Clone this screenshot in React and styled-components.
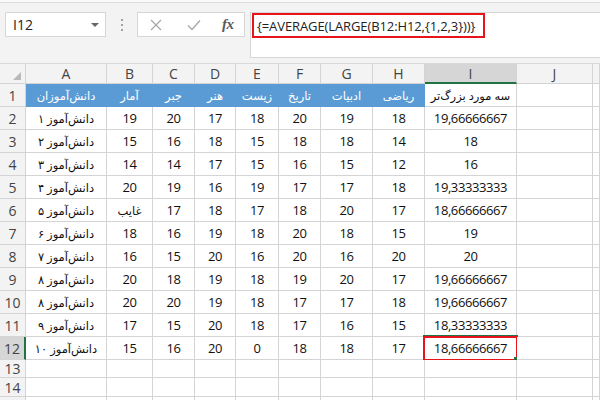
import React from 'react';
import styled, { createGlobalStyle, css } from 'styled-components';

const Global = createGlobalStyle`
  html, body { margin: 0; padding: 0; background: #fff; }
  body { font-family: "Open Sans", "DejaVu Sans", sans-serif; }
  #root { width: 600px; height: 400px; overflow: hidden; }
`;

const Page = styled.div`
  width: 600px;
  height: 400px;
  display: flex;
  flex-direction: column;
  overflow: hidden;
  background: #fff;
`;

const Toolbar = styled.div`
  flex: none;
  height: 63px;
  box-sizing: border-box;
  background: #f3f3f3;
  border-top: 2px solid #fafafa;
  box-shadow: inset 0 1px 0 #dcdcdc;
  display: flex;
  align-items: flex-start;
  padding: 10px 0 0 5px;
`;

const NameBox = styled.div`
  width: 101px;
  height: 25px;
  box-sizing: border-box;
  background: #fff;
  border: 1px solid #d6d6d6;
  display: flex;
  align-items: center;
  justify-content: space-between;
  padding: 0 6px 0 7px;
  font-size: 14px;
  color: #222;
`;

const Caret = styled.span`
  width: 0;
  height: 0;
  border-left: 4px solid transparent;
  border-right: 4px solid transparent;
  border-top: 4px solid #666;
`;

const Dots = styled.div`
  width: 31px;
  height: 25px;
  display: flex;
  flex-direction: column;
  align-items: center;
  justify-content: center;
  gap: 3px;
  span {
    width: 2px;
    height: 2px;
    background: #a0a0a0;
  }
`;

const Buttons = styled.div`
  width: 108px;
  height: 25px;
  box-sizing: border-box;
  background: #fff;
  border: 1px solid #d6d6d6;
  display: flex;
  align-items: center;
  padding: 0 0 0 12px;
`;

const IconSlot = styled.div`
  width: ${p => p.$w}px;
  display: flex;
  align-items: center;
  color: #a8a8a8;
`;

const Fx = styled.span`
  font-family: "Liberation Serif", "DejaVu Serif", serif;
  font-style: italic;
  font-weight: bold;
  font-size: 15px;
  color: #5a5a5a;
  letter-spacing: -0.5px;
`;

const FormulaBar = styled.div`
  margin-left: 5px;
  flex: 1;
  height: 46px;
  box-sizing: border-box;
  background: #fff;
  border: 1px solid #d6d6d6;
  border-right: none;
  padding: 0 0 0 1px;
`;

const FormulaText = styled.div`
  width: 233px;
  height: 25px;
  box-sizing: border-box;
  border: 2px solid #e8141c;
  display: flex;
  align-items: center;
  padding-left: 3px;
  font-size: 13px;
  letter-spacing: -0.1px;
  color: #222;
  white-space: nowrap;
`;

const cols = [26, 81, 46, 42, 41, 43, 42, 52, 52, 92, 76];

const Sheet = styled.div`
  display: grid;
  grid-template-columns: ${cols.map(c => c + 'px').join(' ')} 1fr;
  grid-template-rows: 21px repeat(12, 23px) 18px 19px 20px;
`;

const HeadBase = css`
  box-sizing: border-box;
  background: #f3f3f3;
  color: #444;
  display: flex;
  align-items: center;
  justify-content: center;
  font-family: "Open Sans", sans-serif;
  font-size: 14px;
`;

const Corner = styled.div`
  ${HeadBase};
  border-top: 1px solid #d9d9d9;
  border-right: 1px solid #d4d4d4;
  border-bottom: 1px solid #d4d4d4;
  position: relative;
  &::after {
    content: '';
    position: absolute;
    right: 4px;
    bottom: 3px;
    width: 0;
    height: 0;
    border-left: 8px solid transparent;
    border-bottom: 8px solid #b9b9b9;
  }
`;

const ColHead = styled.div`
  ${HeadBase};
  border-top: 1px solid #d9d9d9;
  border-right: 1px solid #d4d4d4;
  border-bottom: ${p => p.$sel ? '2px solid #217346' : '1px solid #d4d4d4'};
  background: ${p => p.$sel ? '#d6d6d6' : '#f3f3f3'};
`;

const RowHead = styled.div`
  ${HeadBase};
  border-bottom: 1px solid #d4d4d4;
  border-right: ${p => p.$sel ? '2px solid #217346' : '1px solid #d4d4d4'};
  background: ${p => p.$sel ? '#d6d6d6' : '#f3f3f3'};
`;

const Cell = styled.div`
  box-sizing: border-box;
  position: relative;
  display: flex;
  align-items: center;
  justify-content: center;
  white-space: nowrap;
  color: #111;
  font-size: 13px;
  letter-spacing: -0.4px;
  border-right: 1px solid ${p => p.$blue ? '#5b9bd5' : '#d4d4d4'};
  border-bottom: 1px solid ${p => p.$blue ? '#5b9bd5' : '#d4d4d4'};
  background: ${p => p.$blue ? '#5b9bd5' : '#fff'};
  ${p => p.$blue && css`color: #fff;`}
  ${p => p.$text && css`direction: rtl; font-size: 11.5px; letter-spacing: 0;`}
`;

const Selection = styled.div`
  position: absolute;
  top: -1px;
  left: -2px;
  right: -2px;
  bottom: -2px;
  border: 2px solid #e8141c;
  box-shadow: 0 -1px 0 #217346;
  pointer-events: none;
`;

const Handle = styled.div`
  position: absolute;
  right: -3px;
  bottom: -3px;
  width: 5px;
  height: 5px;
  background: #217346;
`;

const letters = ['A', 'B', 'C', 'D', 'E', 'F', 'G', 'H', 'I', 'J', ''];

const headers = ['دانش\u200cآموزان', 'آمار', 'جبر', 'هنر', 'زیست', 'تاریخ', 'ادبیات', 'ریاضی', 'سه مورد بزرگ\u200cتر'];

const fa = ['۱', '۲', '۳', '۴', '۵', '۶', '۷', '۸', '۸', '۹', '۱۰'];

const data = [
  ['19', '20', '17', '18', '20', '19', '18', '19,66666667'],
  ['15', '16', '18', '15', '18', '18', '14', '18'],
  ['14', '14', '17', '15', '16', '15', '12', '16'],
  ['20', '19', '16', '19', '17', '17', '18', '19,33333333'],
  ['غایب', '17', '18', '17', '18', '20', '17', '18,66666667'],
  ['18', '16', '19', '18', '20', '18', '15', '19'],
  ['16', '15', '20', '16', '20', '16', '20', '20'],
  ['20', '18', '19', '18', '19', '20', '17', '19,66666667'],
  ['20', '20', '19', '18', '17', '17', '18', '19,66666667'],
  ['17', '15', '20', '18', '17', '16', '15', '18,33333333'],
  ['15', '16', '20', '0', '18', '18', '17', '18,66666667'],
];

const XIcon = () => (
  <svg width="12" height="12" viewBox="0 0 12 12">
    <path d="M1 1 L11 11 M11 1 L1 11" stroke="#a8a8a8" strokeWidth="1.3" fill="none" />
  </svg>
);

const CheckIcon = () => (
  <svg width="14" height="12" viewBox="0 0 14 12">
    <path d="M1 6.5 L5 10.5 L13 1.5" stroke="#a8a8a8" strokeWidth="1.4" fill="none" />
  </svg>
);

export default function App() {
  const rows = [];
  rows.push(<Corner key="corner" />);
  letters.forEach((l, i) => rows.push(<ColHead key={'h' + i} $sel={l === 'I'}>{l}</ColHead>));
  rows.push(<RowHead key="r1">1</RowHead>);
  headers.forEach((h, i) => rows.push(
    <Cell key={'c1-' + i} $blue={i < 8} $text>{h}</Cell>
  ));
  rows.push(<Cell key="c1-j" />, <Cell key="c1-k" />);
  data.forEach((r, ri) => {
    const n = ri + 2;
    const sel = n === 12;
    rows.push(<RowHead key={'r' + n} $sel={sel}>{n}</RowHead>);
    rows.push(<Cell key={'a' + n} $text>{'دانش\u200cآموز ' + fa[ri]}</Cell>);
    r.forEach((v, ci) => {
      const isI = ci === 7;
      rows.push(
        <Cell key={'c' + n + '-' + ci} $text={v === 'غایب'}>
          {v}
          {isI && sel && (<Selection><Handle /></Selection>)}
        </Cell>
      );
    });
    rows.push(<Cell key={'j' + n} />, <Cell key={'k' + n} />);
  });
  [13, 14, 15].forEach(n => {
    rows.push(<RowHead key={'r' + n}>{n < 15 ? n : ''}</RowHead>);
    for (let i = 0; i < 11; i++) rows.push(<Cell key={'e' + n + '-' + i} />);
  });

  return (
    <Page>
      <Global />
      <Toolbar>
        <NameBox>
          <span>I12</span>
          <Caret />
        </NameBox>
        <Dots><span /><span /><span /></Dots>
        <Buttons>
          <IconSlot $w={37}><XIcon /></IconSlot>
          <IconSlot $w={35}><CheckIcon /></IconSlot>
          <IconSlot $w={20}><Fx>fx</Fx></IconSlot>
        </Buttons>
        <FormulaBar>
          <FormulaText>{'{=AVERAGE(LARGE(B12:H12,{1,2,3}))}'}</FormulaText>
        </FormulaBar>
      </Toolbar>
      <Sheet>{rows}</Sheet>
    </Page>
  );
}
